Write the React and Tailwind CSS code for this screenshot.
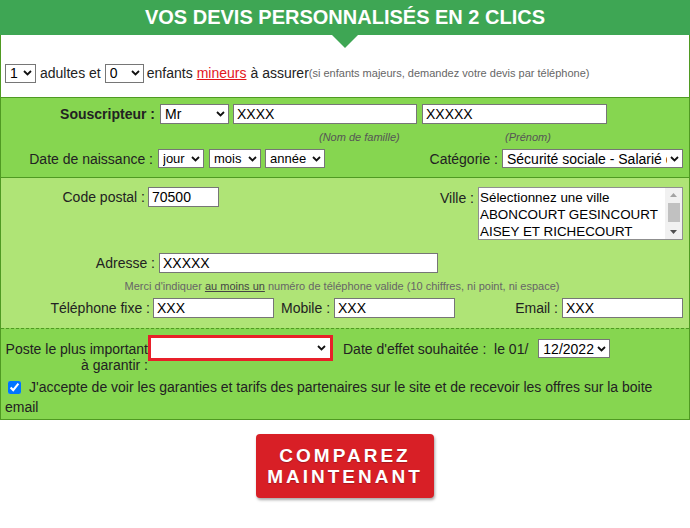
import { useState } from "react";

const inp = "h-[20px] border border-[#767676] bg-white text-[14px] text-black px-[3px] outline-none";

function Chevron() {
  return (
    <svg
      className="pointer-events-none absolute right-[4px] top-1/2 -translate-y-1/2"
      width="9"
      height="6"
      viewBox="0 0 9 6"
    >
      <path d="M1 1l3.5 3.5L8 1" stroke="#111" strokeWidth="1.8" fill="none" />
    </svg>
  );
}

function Select({ className = "", options, size = "text-[14px]", bordered = true }) {
  return (
    <div className={"relative shrink-0 " + className}>
      <select
        className={
          "appearance-none w-full h-full bg-white text-black pl-[4px] pr-[15px] outline-none " +
          size +
          (bordered ? " border border-[#767676]" : "")
        }
      >
        {options.map((o) => (
          <option key={o}>{o}</option>
        ))}
      </select>
      <Chevron />
    </div>
  );
}

export default function App() {
  const [accept, setAccept] = useState(true);

  return (
    <div className="w-[690px] bg-white font-['Liberation_Sans',Arial,sans-serif] text-[14px] leading-[16px] text-[#222]">
      {/* header */}
      <div className="relative h-[35px] bg-[#3ea654] flex items-center justify-center">
        <h1 className="text-white text-[20px] font-bold leading-none -mt-[1px]">
          VOS DEVIS PERSONNALISÉS EN 2 CLICS
        </h1>
        <div className="absolute left-[332px] top-[35px] w-0 h-0 border-l-[13px] border-r-[13px] border-t-[13px] border-l-transparent border-r-transparent border-t-[#3ea654]" />
      </div>

      <div className="border-x border-b border-[#4f9a22]">
        {/* personnes */}
        <div className="h-[62px] pt-[14px] px-[4px] flex items-center whitespace-nowrap">
          <Select className="w-[31px] h-[19px]" options={["1", "2", "3"]} />
          <span className="ml-[4px]">adultes et</span>
          <Select className="w-[39px] h-[19px] ml-[4px]" options={["0", "1", "2"]} />
          <span className="ml-[3px]">enfants</span>
          <span className="ml-[4px] text-[#e3161b] underline">mineurs</span>
          <span className="ml-[4px]">à assurer</span>
          <span className="text-[11px] text-[#666]">
            (si enfants majeurs, demandez votre devis par téléphone)
          </span>
        </div>

        {/* souscripteur */}
        <div className="border-t border-[#4f9a22] bg-[#86d650] pt-[6px] pb-[9px] pr-[6px]">
          <div className="flex items-center">
            <span className="w-[154px] text-right font-bold">Souscripteur :</span>
            <Select className="w-[69px] h-[20px] ml-[5px]" options={["Mr", "Mme"]} />
            <input className={inp + " w-[184px] ml-[4px]"} defaultValue="XXXX" />
            <input className={inp + " w-[185px] ml-[5px]"} defaultValue="XXXXX" />
          </div>
          <div className="flex items-center h-[25px] text-[11px] italic text-[#555]">
            <span className="w-[186px] ml-[318px]">(Nom de famille)</span>
            <span>(Prénom)</span>
          </div>
          <div className="flex items-center">
            <span className="w-[152px] text-right">Date de naissance :</span>
            <Select className="w-[46px] h-[19px] ml-[5px]" size="text-[13px]" options={["jour"]} />
            <Select className="w-[52px] h-[19px] ml-[5px]" size="text-[13px]" options={["mois"]} />
            <Select className="w-[60px] h-[19px] ml-[4px]" size="text-[13px]" options={["année"]} />
            <span className="ml-auto">Catégorie :</span>
            <Select
              className="w-[181px] h-[19px] ml-[4px]"
              options={["Sécurité sociale - Salarié du privé"]}
            />
          </div>
        </div>

        {/* adresse */}
        <div className="border-t border-[#4f9a22] bg-[#afe476] pt-[9px] pb-[10px] pr-[6px]">
          <div className="flex items-start h-[52px]">
            <span className="w-[144px] text-right pt-[2px]">Code postal :</span>
            <input className={inp + " w-[71px] ml-[3px]"} defaultValue="70500" />
            <span className="ml-auto pt-[3px]">Ville :</span>
            <div className="ml-[4px] w-[205px] h-[53px] border border-[#8f8f8f] bg-white flex">
              <div className="flex-1 pl-[1px] pt-[1px] text-black text-[13.4px] leading-[17px] overflow-hidden whitespace-nowrap">
                <div>Sélectionnez une ville</div>
                <div>ABONCOURT GESINCOURT</div>
                <div>AISEY ET RICHECOURT</div>
              </div>
              <div className="w-[17px] bg-[#f1f1f1] flex flex-col items-center">
                <svg width="17" height="14" viewBox="0 0 17 14">
                  <path d="M5 9l3.5-4L12 9z" fill="#a3a3a3" />
                </svg>
                <div className="w-[12px] h-[19px] bg-[#c1c1c1] mt-[1px]" />
                <div className="flex-1" />
                <svg width="17" height="14" viewBox="0 0 17 14">
                  <path d="M5 5l3.5 4L12 5z" fill="#505050" />
                </svg>
              </div>
            </div>
          </div>
          <div className="flex items-center mt-[14px]">
            <span className="w-[154px] text-right">Adresse :</span>
            <input className={inp + " w-[279px] ml-[4px]"} defaultValue="XXXXX" />
          </div>
          <p className="mt-[6px] h-[14px] text-center text-[11px] leading-[14px] text-[#666]">
            Merci d'indiquer <span className="underline text-[#444]">au moins un</span> numéro de
            téléphone valide (10 chiffres, ni point, ni espace)
          </p>
          <div className="flex items-center mt-[5px]">
            <span className="w-[149px] text-right">Téléphone fixe :</span>
            <input className={inp + " w-[121px] ml-[3px]"} defaultValue="XXX" />
            <span className="ml-[7px]">Mobile :</span>
            <input className={inp + " w-[121px] ml-[4px]"} defaultValue="XXX" />
            <span className="ml-auto">Email :</span>
            <input className={inp + " w-[121px] ml-[4px]"} defaultValue="XXX" />
          </div>
        </div>

        {/* garanties */}
        <div className="border-t border-dashed border-[#4f9a22] bg-[#86d650] pt-[6px] pb-[2px] px-[4px]">
          <div className="flex items-start">
            <div className="w-[143px] text-right pt-[6px]">
              <div className="whitespace-nowrap">Poste le plus important</div>
              <div>à garantir :</div>
            </div>
            <div className="border-[3px] border-[#e8202a] w-[185px] h-[26px] shrink-0">
              <Select className="w-full h-full" bordered={false} options={[""]} />
            </div>
            <span className="ml-[10px] mt-[6px] whitespace-pre">Date d'effet souhaitée :  le 01/</span>
            <Select className="w-[72px] h-[19px] ml-[10px] mt-[4px]" options={["12/2022", "01/2023"]} />
          </div>
          <div className="mt-[4px] leading-[20px]">
            <input
              type="checkbox"
              checked={accept}
              onChange={(e) => setAccept(e.target.checked)}
              className="w-[13px] h-[13px] ml-[3px] mr-[8px] align-[-2px] accent-[#0075ff]"
            />
            J'accepte de voir les garanties et tarifs des partenaires sur le site et de recevoir
            les offres sur la boite email
          </div>
        </div>
      </div>

      {/* bouton */}
      <div className="flex justify-center pt-[14px] pb-[31px]">
        <button className="w-[178px] h-[64px] rounded-[4px] bg-[#d81f26] text-white font-bold text-[19px] leading-[21px] tracking-[3px] shadow-[1px_2px_3px_rgba(0,0,0,0.35)] [text-shadow:0_1px_1px_rgba(0,0,0,0.25)]">
          COMPAREZ
          <br />
          MAINTENANT
        </button>
      </div>
    </div>
  );
}
